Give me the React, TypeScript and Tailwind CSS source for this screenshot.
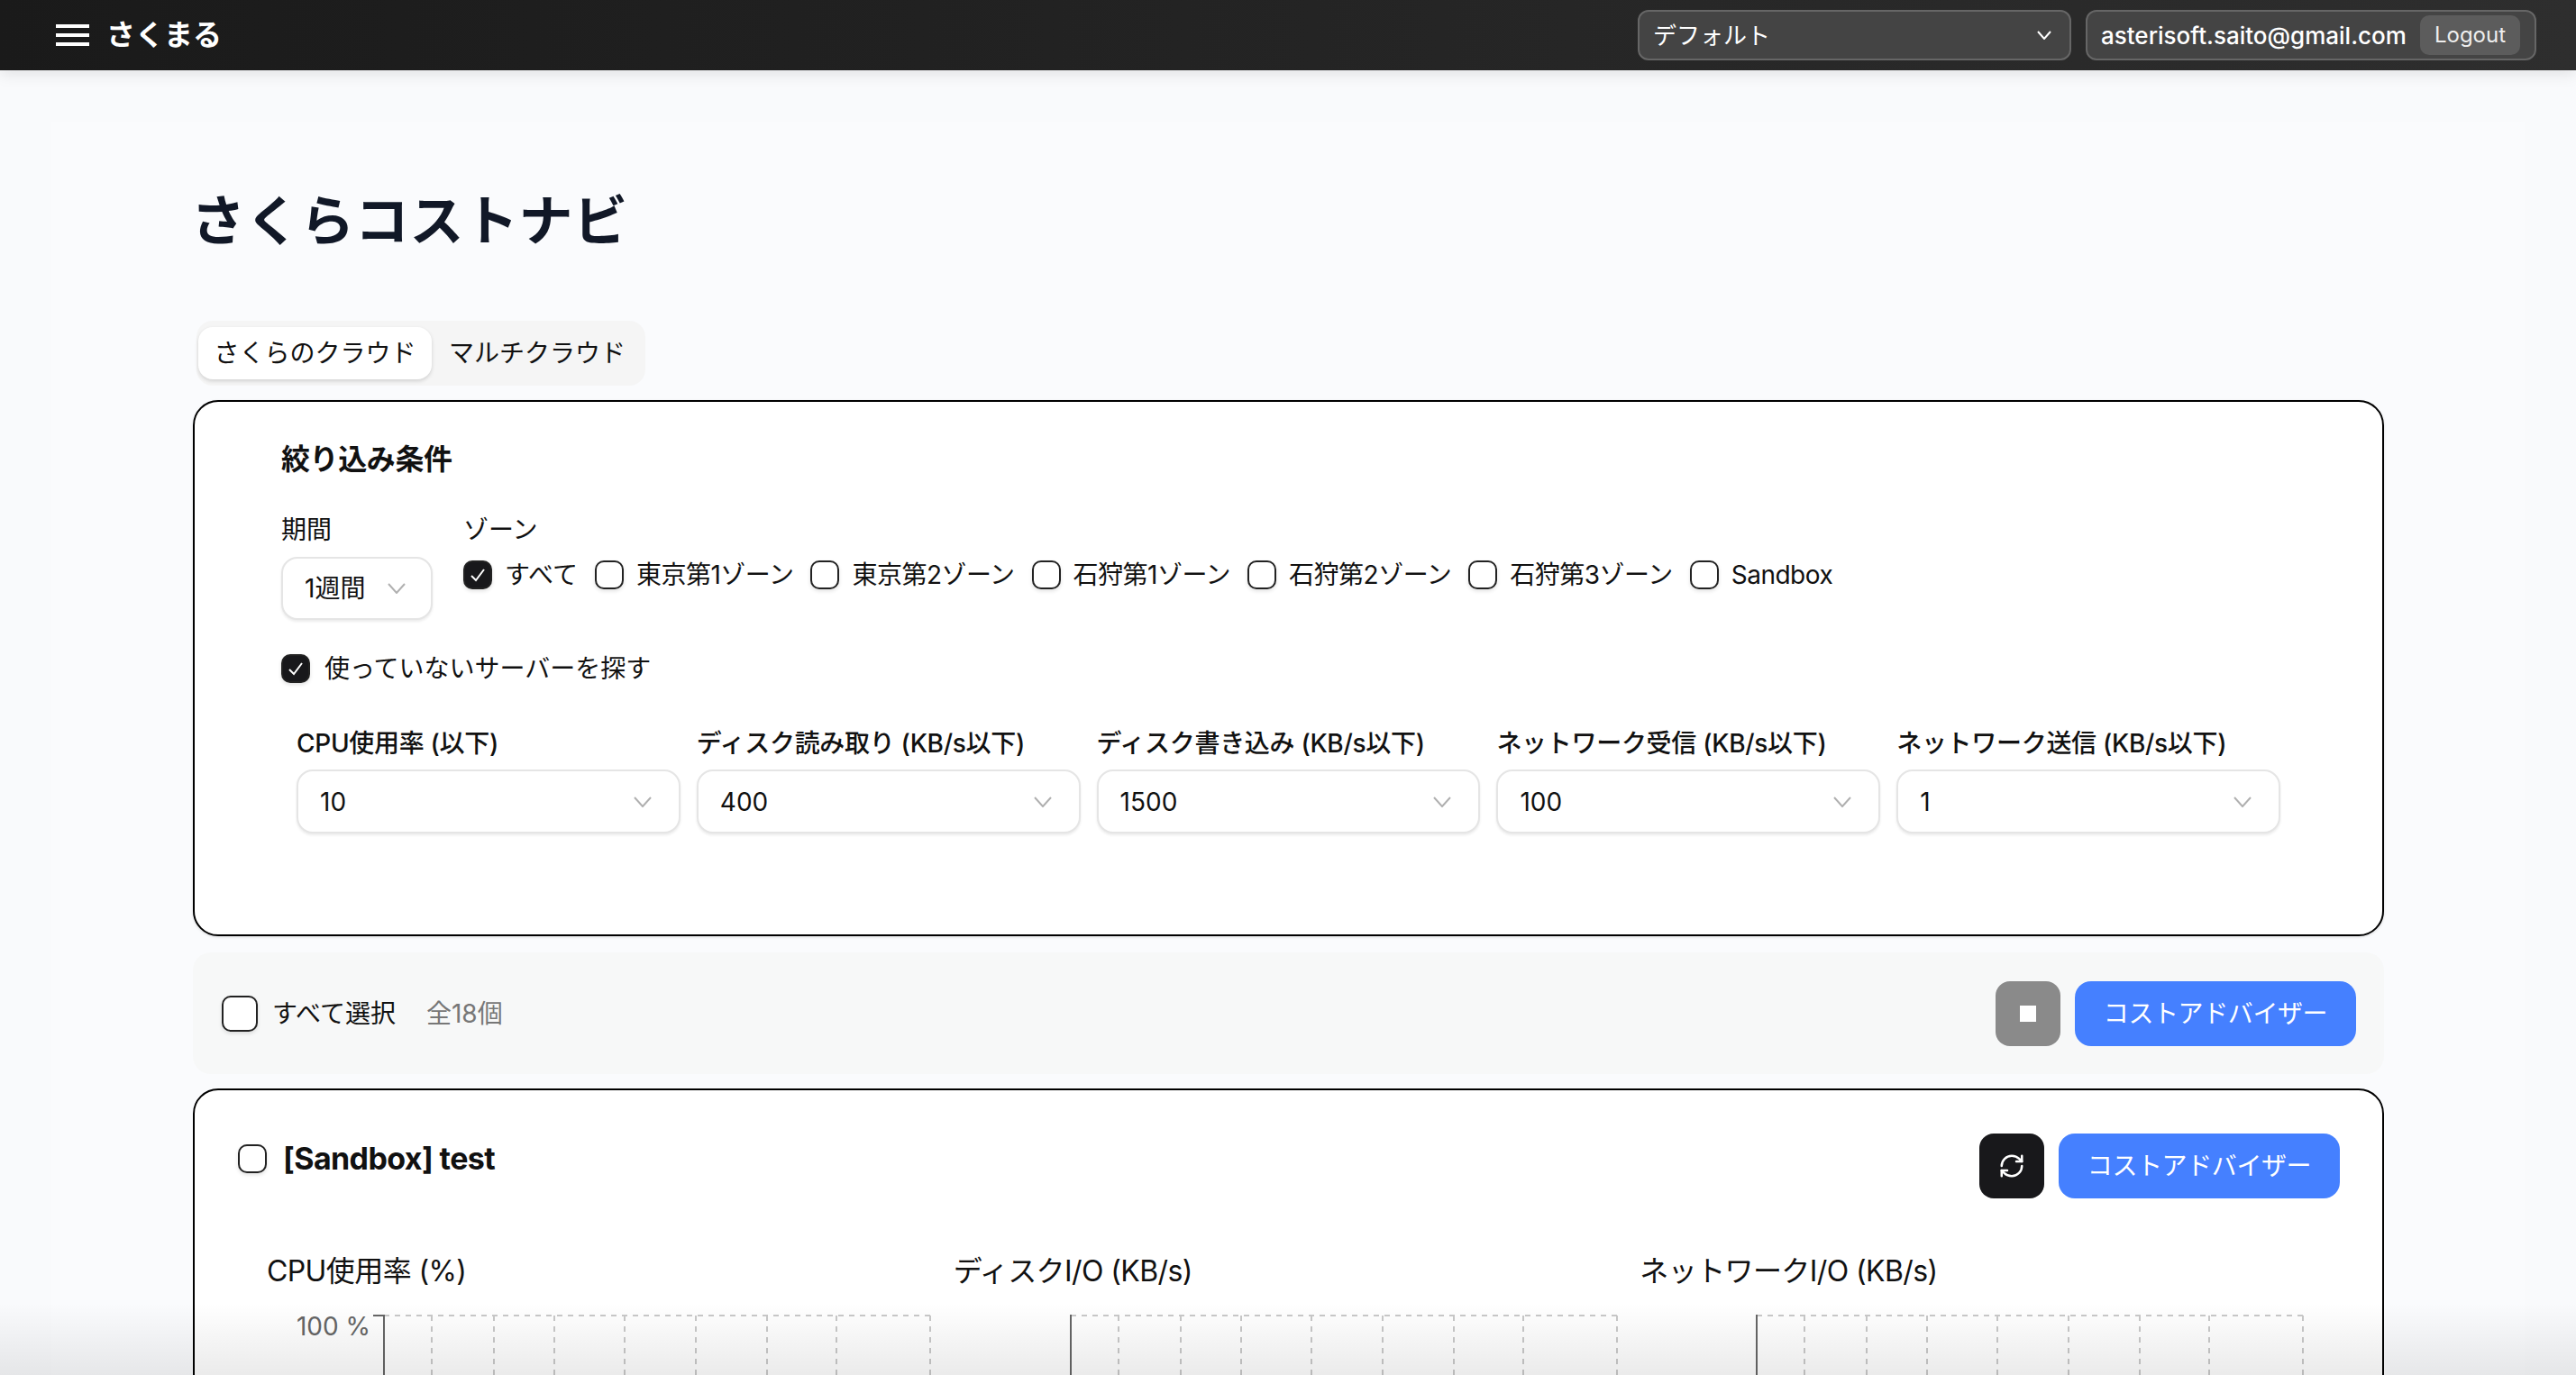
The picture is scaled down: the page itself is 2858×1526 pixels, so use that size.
import { RefreshCw } from 'lucide-react';

const ZONES = ['東京第1ゾーン', '東京第2ゾーン', '石狩第1ゾーン', '石狩第2ゾーン', '石狩第3ゾーン', 'Sandbox'];

const THRESHOLDS = [
  { label: 'CPU使用率 (以下)', value: '10' },
  { label: 'ディスク読み取り (KB/s以下)', value: '400' },
  { label: 'ディスク書き込み (KB/s以下)', value: '1500' },
  { label: 'ネットワーク受信 (KB/s以下)', value: '100' },
  { label: 'ネットワーク送信 (KB/s以下)', value: '1' },
];

const CHARTS = [
  { title: 'CPU使用率 (%)', unit: '100 %' },
  { title: 'ディスクI/O (KB/s)', unit: '' },
  { title: 'ネットワークI/O (KB/s)', unit: '' },
];

const GRID_X = [182, 251, 318, 396, 475, 554, 631, 735];

function Chevron({ className = 'stroke-[#b0b0b0]' }: { className?: string }) {
  return (
    <svg width="20" height="12" viewBox="0 0 20 12" fill="none" className={className} strokeWidth="2">
      <polyline points="1,1 10,11 19,1" />
    </svg>
  );
}

function Checkbox({ checked = false }: { checked?: boolean }) {
  return (
    <span
      className={`flex h-8 w-8 shrink-0 items-center justify-center rounded-[10px] border-2 border-[#222] shadow-[0_2px_4px_rgba(0,0,0,0.12)] ${
        checked ? 'bg-[#18181b]' : 'bg-white'
      }`}
    >
      {checked && (
        <svg width="20" height="20" viewBox="0 0 20 20" fill="none" stroke="white" strokeWidth="2">
          <polyline points="3,11 8,16 17,4" />
        </svg>
      )}
    </span>
  );
}

function Select({ value, className }: { value: string; className: string }) {
  return (
    <div
      className={`flex h-[71px] items-center justify-between rounded-[18px] border-2 border-[#e5e5e5] bg-white shadow-[0_2px_3px_rgba(0,0,0,0.08)] ${className}`}
    >
      <span className="text-[28px] text-[#111]">{value}</span>
      <Chevron />
    </div>
  );
}

function AdvisorButton() {
  return (
    <button
      type="button"
      className="flex h-[72px] w-[312px] items-center justify-center rounded-[18px] bg-[#4580ff] text-[28px] tracking-[-0.4px] text-white"
    >
      コストアドバイザー
    </button>
  );
}

function Chart({ unit }: { unit: string }) {
  return (
    <div className="relative">
      <svg width="740" height="80" viewBox="0 0 740 80" fill="none" className="block">
        {GRID_X.map((x) => (
          <line key={x} x1={x} y1="1" x2={x} y2="80" stroke="#c9c9c9" strokeWidth="2" strokeDasharray="6 6" />
        ))}
        <line x1="129" y1="1" x2="736" y2="1" stroke="#c9c9c9" strokeWidth="2" strokeDasharray="6 6" />
        <line x1="129" y1="0" x2="129" y2="80" stroke="#666" strokeWidth="2" />
        {unit && <line x1="117" y1="1" x2="129" y2="1" stroke="#666" strokeWidth="2" />}
      </svg>
      {unit && (
        <span className="absolute left-0 top-0 w-[114px] text-right text-[28px] leading-[26px] text-[#666]">{unit}</span>
      )}
    </div>
  );
}

export default function App() {
  return (
    <div className="relative h-[1526px] w-full overflow-hidden bg-[#f9fafc] font-['Inter','Noto_Sans_CJK_JP',sans-serif] text-[#111]">
      {/* ── Header ─────────────────────────────────────────────── */}
      <header className="relative z-10 flex h-[78px] items-center justify-between bg-gradient-to-r from-[#1a1a1a] to-[#2e2e2e] pl-[62px] pr-[44px] shadow-[0_4px_16px_rgba(0,0,0,0.1)]">
        <div className="flex items-center gap-[19px]">
          <div className="flex h-6 w-[37px] flex-col justify-between">
            <span className="h-1 bg-white" />
            <span className="h-1 bg-white" />
            <span className="h-1 bg-white" />
          </div>
          <span className="text-[32px] font-bold text-white">さくまる</span>
        </div>
        <div className="flex items-center gap-4">
          <div className="flex h-[56px] w-[481px] items-center justify-between rounded-[12px] border-2 border-[#666] bg-[#444] pl-[15px] pr-5">
            <span className="text-[26px] text-white">デフォルト</span>
            <svg width="16" height="10" viewBox="0 0 16 10" fill="none" stroke="white" strokeWidth="2">
              <polyline points="1,1 8,9 15,1" />
            </svg>
          </div>
          <div className="flex h-[56px] w-[500px] items-center justify-between rounded-[12px] border-2 border-[#666] bg-[#444] pl-[15px] pr-4">
            <span className="text-[26px] font-medium text-white">asterisoft.saito@gmail.com</span>
            <span className="flex h-11 w-[111px] items-center justify-center rounded-[10px] bg-[#5c5c5c] text-[24px] text-[#eee]">
              Logout
            </span>
          </div>
        </div>
      </header>

      {/* ── Content ────────────────────────────────────────────── */}
      <div className="mx-[57px] mt-[57px] bg-[#fafbfd] pl-[157px] pr-[156px] pt-[74px]">
        <h1 className="-ml-[2px] text-[60px] font-bold leading-[72px] tracking-[0.6px] text-[#111827]">さくらコストナビ</h1>

        {/* Tabs */}
        <div className="ml-[4px] mt-[75px] flex h-[72px] w-[498px] items-center rounded-[18px] bg-[#f5f5f5] pl-[2px]">
          <span className="flex h-[58px] w-[259px] items-center justify-center rounded-[16px] bg-white text-[28px] shadow-[0_2px_4px_rgba(0,0,0,0.15)]">
            さくらのクラウド
          </span>
          <span className="ml-[19px] text-[28px]">マルチクラウド</span>
        </div>

        {/* Filter card */}
        <section className="mt-4 rounded-[28px] border-2 border-black bg-white pb-[112px] pl-[96px] pr-[113px] pt-[44px] shadow-[0_1px_3px_rgba(0,0,0,0.15)]">
          <h2 className="text-[32px] font-bold leading-[40px] tracking-[-0.4px]">絞り込み条件</h2>

          <div className="mt-[38px] flex items-start gap-[34px]">
            <div>
              <p className="text-[28px] leading-[40px]">期間</p>
              <div className="mt-[10px] flex h-[70px] w-[168px] items-center justify-between rounded-[18px] border-2 border-[#e5e5e5] bg-white pl-[24px] pr-[28px] shadow-[0_2px_3px_rgba(0,0,0,0.08)]">
                <span className="text-[28px]">1週間</span>
                <Chevron />
              </div>
            </div>
            <div>
              <p className="text-[28px] leading-[40px]">ゾーン</p>
              <div className="mt-[14px] flex items-center gap-[19px]">
                <label className="flex items-center gap-[14px]">
                  <Checkbox checked />
                  <span className="text-[28px] leading-8">すべて</span>
                </label>
                {ZONES.map((zone) => (
                  <label key={zone} className="flex items-center gap-[14px]">
                    <Checkbox />
                    <span className="text-[28px] leading-8 tracking-[-0.5px]">{zone}</span>
                  </label>
                ))}
              </div>
            </div>
          </div>

          <label className="mt-[38px] flex items-center gap-[16px]">
            <Checkbox checked />
            <span className="text-[28px] leading-8">使っていないサーバーを探す</span>
          </label>

          <div className="ml-[17px] mt-[47px] grid grid-cols-5 gap-[18px]">
            {THRESHOLDS.map((t) => (
              <div key={t.label}>
                <p className="whitespace-nowrap text-[28px] font-medium leading-[40px] tracking-[-0.3px]">{t.label}</p>
                <Select value={t.value} className="mt-[9px] pl-[24px] pr-[30px]" />
              </div>
            ))}
          </div>
        </section>

        {/* Bulk action bar */}
        <div className="mt-[18px] flex h-[135px] items-center justify-between rounded-[20px] bg-[#f7f8f8] pl-8 pr-[31px]">
          <div className="flex items-center">
            <span className="h-10 w-10 rounded-[10px] border-2 border-[#222] bg-white shadow-[0_2px_4px_rgba(0,0,0,0.12)]" />
            <span className="ml-[16px] text-[28px]">すべて選択</span>
            <span className="ml-[34px] text-[28px] text-[#777]">全18個</span>
          </div>
          <div className="flex items-center gap-4">
            <button type="button" className="flex h-[72px] w-[72px] items-center justify-center rounded-[16px] bg-[#8a8a8a]">
              <span className="h-[18px] w-[18px] bg-white" />
            </button>
            <AdvisorButton />
          </div>
        </div>

        {/* Server card */}
        <section className="mt-4 h-[600px] rounded-[28px] border-2 border-black bg-white pl-[48px] pr-[47px] pt-[48px]">
          <div className="flex items-start justify-between">
            <div className="flex items-center gap-[18px] pt-3">
              <Checkbox />
              <h3 className="text-[34px] font-bold leading-8 tracking-[-0.6px]">[Sandbox] test</h3>
            </div>
            <div className="flex items-center gap-4">
              <button type="button" className="flex h-[72px] w-[72px] items-center justify-center rounded-[16px] bg-[#18181b]">
                <RefreshCw size={30} color="white" strokeWidth={2} />
              </button>
              <AdvisorButton />
            </div>
          </div>

          <div className="ml-[33px] mt-[61px] grid w-[2285px] grid-cols-3">
            {CHARTS.map((c) => (
              <div key={c.title}>
                <p className="-ml-[1px] text-[32px] leading-[40px] tracking-[-0.6px]">{c.title}</p>
                <div className="mt-[28px]">
                  <Chart unit={c.unit} />
                </div>
              </div>
            ))}
          </div>
        </section>
      </div>

      {/* Fade over the bottom edge */}
      <div className="pointer-events-none absolute inset-x-0 bottom-0 z-20 h-[80px] bg-gradient-to-b from-transparent to-black/8" />
    </div>
  );
}
